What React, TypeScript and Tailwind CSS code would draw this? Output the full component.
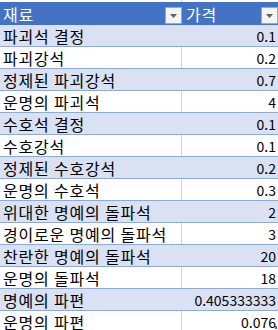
const rows: [string, string][] = [
  ["파괴석 결정", "0.1"],
  ["파괴강석", "0.2"],
  ["정제된 파괴강석", "0.7"],
  ["운명의 파괴석", "4"],
  ["수호석 결정", "0.1"],
  ["수호강석", "0.1"],
  ["정제된 수호강석", "0.2"],
  ["운명의 수호석", "0.3"],
  ["위대한 명예의 돌파석", "2"],
  ["경이로운 명예의 돌파석", "3"],
  ["찬란한 명예의 돌파석", "20"],
  ["운명의 돌파석", "18"],
  ["명예의 파편", "0.405333333"],
  ["운명의 파편", "0.076"],
];

function FilterButton() {
  return (
    <div className="flex h-[17px] w-[17px] shrink-0 items-center justify-center border border-[#a6a6a6] bg-[#f4f4f4]">
      <svg width="7" height="4" viewBox="0 0 7 4">
        <path d="M0 0H7L3.5 4Z" fill="#5f5f5f" />
      </svg>
    </div>
  );
}

export default function App() {
  return (
    <div
      className="h-[330px] w-[278px] overflow-hidden bg-white text-[16px] text-black"
      style={{ fontFamily: '"Noto Sans CJK KR", "Noto Sans", sans-serif' }}
    >
      <div className="grid h-[2px] grid-cols-[182px_1fr]">
        <div className="border-r border-[#d4d4d4]" />
        <div />
      </div>

      <div className="grid h-[22px] grid-cols-[182px_1fr] border-t border-[#4472c4] bg-[#4472c4] text-white">
        <div className="flex items-end justify-between pl-[3px]">
          <span className="self-center leading-none tracking-[0.8px]">재료</span>
          <FilterButton />
        </div>
        <div className="flex items-end justify-between pl-[4px]">
          <span className="self-center leading-none tracking-[0.8px]">가격</span>
          <FilterButton />
        </div>
      </div>

      {rows.map(([name, price], i) => {
        const banded = i % 2 === 0;
        const last = i === rows.length - 1;
        return (
          <div
            key={name}
            className={`grid h-[22px] grid-cols-[182px_1fr] border-t ${
              i === 0 ? "border-[#4472c4]" : "border-[#8ea9db]"
            } ${banded ? "bg-[#d9e1f2]" : "bg-white"}`}
          >
            <div
              className={`flex items-center whitespace-nowrap pl-[3px] leading-none tracking-[0.8px] ${
                banded ? "" : "border-r border-[#d4d4d4]"
              }`}
            >
              {name}
            </div>
            <div className="relative flex items-center justify-end pr-[2px] text-[14px] leading-none">
              {price}
              {last ? <span className="absolute bottom-[3px] right-[1px] h-[3px] w-[2px] bg-[#4472c4]" /> : null}
            </div>
          </div>
        );
      })}
    </div>
  );
}
